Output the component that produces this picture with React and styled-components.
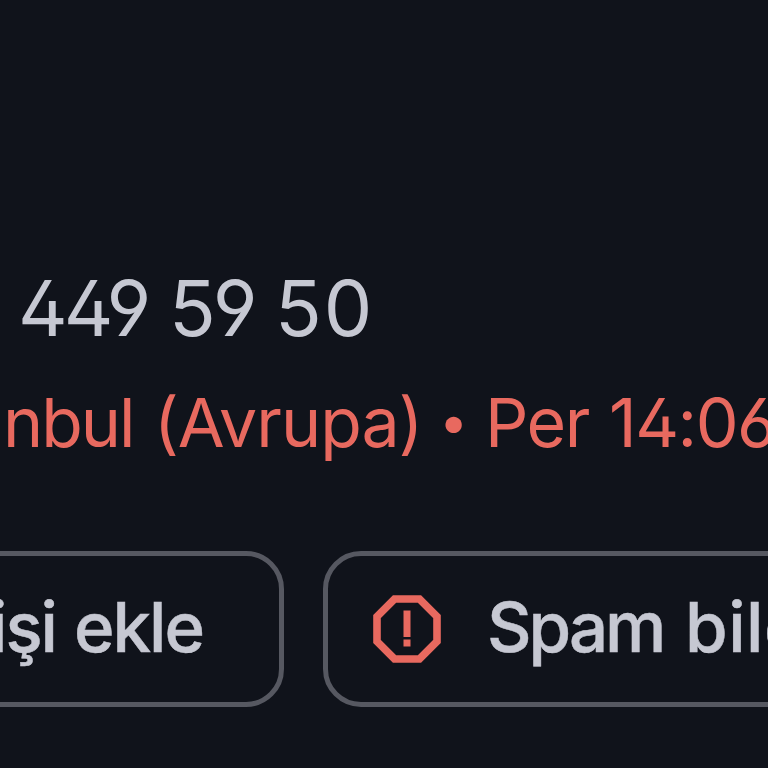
import React from 'react';
import styled, { createGlobalStyle } from 'styled-components';

const GlobalStyle = createGlobalStyle`
    html,
    body {
        margin: 0;
        overflow: hidden;
        background-color: #10131b;
    }
`;

const Screen = styled.main`
    box-sizing: border-box;
    display: flex;
    flex-direction: column;
    width: 768px;
    height: 768px;
    padding-top: 260px;
    overflow: hidden;
    background-color: #10131b;
    font-family: Inter, 'Open Sans', sans-serif;
    color: #c6c8d2;
`;

const TextLine = styled.div`
    display: flex;
    flex-shrink: 0;
    white-space: nowrap;
`;

const PhoneNumber = styled(TextLine)`
    height: 96px;
    padding-left: 18px;
    font-size: 77px;
    line-height: 96px;
    font-feature-settings: 'ss01', 'cv03', 'cv04';
`;

const CallInfo = styled(TextLine)`
    height: 84px;
    margin-top: 24px;
    padding-left: 3px;
    font-size: 68px;
    line-height: 84px;
    color: #e8695f;
    font-feature-settings: 'ss01', 'cv03', 'cv04', 'calt' 0;
`;

const Word = styled.span`
    flex: 0 0 ${({ $width }) => $width}px;
    letter-spacing: ${({ $spacing }) => $spacing || 0}px;
`;

const Separator = styled(Word)`
    font-size: 52px;
    line-height: 83px;
`;

const Actions = styled.div`
    display: flex;
    flex-shrink: 0;
    gap: 39px;
    margin-top: 87px;
`;

const Chip = styled.button`
    box-sizing: border-box;
    display: flex;
    flex: 0 0 ${({ $width }) => $width}px;
    align-items: center;
    height: 156px;
    margin: 0 0 0 ${({ $offset }) => $offset || 0}px;
    padding: 0 0 0 ${({ $inset }) => $inset}px;
    border: 5px solid #565861;
    border-radius: 38px;
    background: none;
    color: inherit;
    font-family: inherit;
    font-size: 69px;
    font-weight: 500;
    line-height: 84px;
    text-align: left;
`;

const Label = styled.span`
    display: flex;
    padding-bottom: 4px;
    white-space: nowrap;
    -webkit-text-stroke: 0.5px currentColor;
`;

const SpamIcon = styled.svg`
    flex: 0 0 68px;
    height: 68px;
    margin-right: 46px;
`;

const App = () => {
    return (
        <>
            <GlobalStyle />
            <Screen>
                <PhoneNumber>
                    <Word $width={151} $spacing={-4}>449</Word>
                    <Word $width={106} $spacing={-3}>59</Word>
                    <Word $width={100} $spacing={2}>50</Word>
                </PhoneNumber>
                <CallInfo>
                    <Word $width={151} $spacing={-2}>nbul</Word>
                    <Word $width={285} $spacing={-1}>(Avrupa)</Word>
                    <Separator $width={46}>•</Separator>
                    <Word $width={124} $spacing={-1.5}>Per</Word>
                    <Word $width={170} $spacing={-1.5}>14:06</Word>
                </CallInfo>
                <Actions>
                    <Chip $width={325} $offset={-41} $inset={26}>
                        <Label>
                            <Word $width={84} $spacing={-2}>işi</Word>
                            <Word $width={130} $spacing={-2}>ekle</Word>
                        </Label>
                    </Chip>
                    <Chip $width={600} $inset={45}>
                        <SpamIcon viewBox="0 0 68 68" fill="none">
                            <path d="M21.5 4h25L64 21.5v25L46.5 64h-25L4 46.5v-25z" stroke="#e8695f" strokeWidth="7.6" />
                            <path d="M34 15.5v26.5M34 44.5v7" stroke="#e8695f" strokeWidth="7" />
                        </SpamIcon>
                        <Label>
                            <Word $width={198} $spacing={-3}>Spam</Word>
                            <Word $width={140} $spacing={0.5}>bile</Word>
                        </Label>
                    </Chip>
                </Actions>
            </Screen>
        </>
    );
};

export default App;
